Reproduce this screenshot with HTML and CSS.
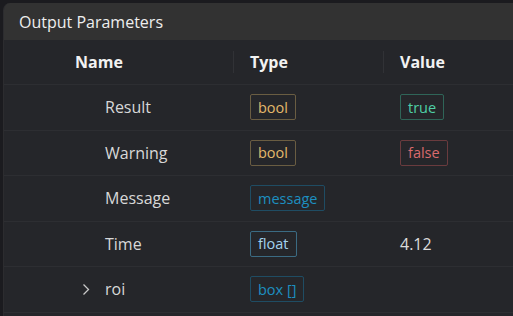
FILE: index.html
```html
<!DOCTYPE html>
<html>
<head>
<meta charset="utf-8">
<link rel="stylesheet" href="styles.css">
</head>
<body>
<div class="panel">
  <div class="panel-title">Output Parameters</div>
  <div class="table">
    <div class="row head">
      <div class="cell name-h">Name</div>
      <div class="cell"><span class="divider"></span>Type</div>
      <div class="cell"><span class="divider"></span>Value</div>
    </div>
    <div class="row">
      <div class="cell name">Result</div>
      <div class="cell type"><span class="badge gold">bool</span></div>
      <div class="cell value"><span class="badge green">true</span></div>
    </div>
    <div class="row">
      <div class="cell name">Warning</div>
      <div class="cell type"><span class="badge gold">bool</span></div>
      <div class="cell value"><span class="badge red">false</span></div>
    </div>
    <div class="row">
      <div class="cell name">Message</div>
      <div class="cell type"><span class="badge blue">message</span></div>
      <div class="cell value"></div>
    </div>
    <div class="row">
      <div class="cell name">Time</div>
      <div class="cell type"><span class="badge lightblue">float</span></div>
      <div class="cell value plain">4.12</div>
    </div>
    <div class="row last">
      <div class="cell name expand"><svg class="chev" width="8" height="13" viewBox="0 0 8 13"><path d="M1.5 1.5 L6.5 6.5 L1.5 11.5" fill="none" stroke="#c8c8c8" stroke-width="1.3"/></svg>roi</div>
      <div class="cell type"><span class="badge blue">box []</span></div>
      <div class="cell value"></div>
    </div>
  </div>
</div>
</body>
</html>
```
FILE: styles.css
```css
html, body {
  margin: 0;
  padding: 0;
  background: #1b1b1f;
  height: 100%;
  overflow: hidden;
}
body {
  padding: 3px 0 0 3px;
  font-family: "Open Sans", "Noto Sans", sans-serif;
}
.panel {
  background: #25262a;
  border-radius: 7px 0 0 0;
  border-left: 1px solid #2c2c2f;
  overflow: hidden;
  height: 400px;
}
.panel-title {
  height: 37px;
  background: #323232;
  color: #eeeeee;
  font-size: 16px;
  display: flex;
  align-items: center;
  padding-left: 15px;
}
.row {
  box-sizing: border-box;
  display: grid;
  grid-template-columns: 229px 150px 1fr;
  height: 45.5px;
  border-bottom: 1px solid #2d2e32;
  align-items: center;
}
.row.head {
  height: 45px;
}
.cell {
  display: flex;
  align-items: center;
  height: 100%;
  font-size: 16px;
  color: #d8d8d8;
}
.head .cell {
  font-weight: 700;
  color: #f2f2f2;
}
.name-h {
  padding-left: 71px;
}
.divider {
  width: 1px;
  height: 22px;
  background: #313236;
  margin-right: 16px;
}
.name {
  padding-left: 101px;
}
.name.expand {
  padding-left: 78px;
}
.chev {
  margin-right: 15px;
}
.type, .value {
  padding-left: 17px;
}
.badge {
  display: inline-flex;
  align-items: center;
  height: 24px;
  padding: 0 7px;
  border: 1px solid;
  border-radius: 2px;
  font-size: 14.5px;
}
.gold { color: #e3b86a; border-color: #6a5d42; }
.green { color: #4fd0a6; border-color: #2f6558; }
.red { color: #d96a6d; border-color: #6a3b3e; }
.blue { color: #1d8fc0; border-color: #1f4c63; }
.lightblue { color: #a3d3ee; border-color: #3b6b83; }
.plain { color: #dcdcdc; }
```
